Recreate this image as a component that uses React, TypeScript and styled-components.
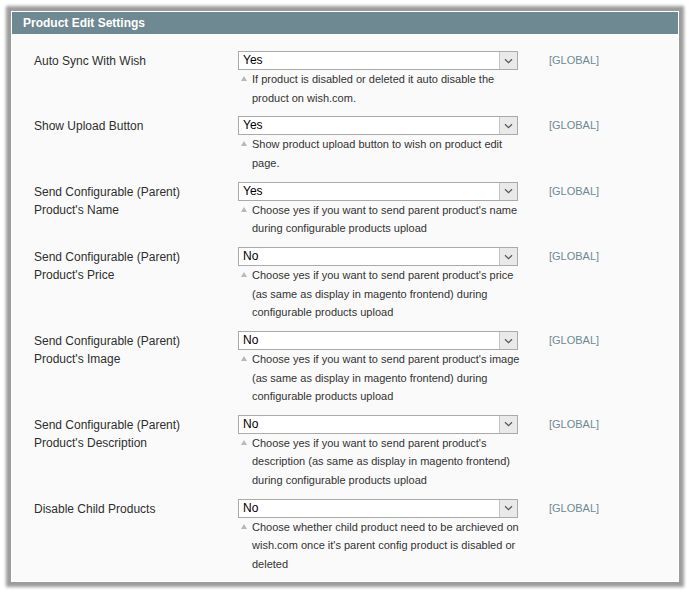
import React from 'react';
import styled, { createGlobalStyle } from 'styled-components';

const GlobalStyle = createGlobalStyle`
  html, body {
    margin: 0;
    padding: 0;
    background: #ffffff;
    font-family: "Liberation Sans", Arial, sans-serif;
  }
`;

const Page = styled.div`
  padding: 11px 10px 11px 11px;
`;

const Frame = styled.div`
  border: 1px solid #ffffff;
  box-shadow: 0 0 3px 5px #9c9c9c;
`;

const Head = styled.div`
  background: #6f8992;
  color: #ffffff;
  font-size: 12px;
  font-weight: bold;
  height: 22px;
  line-height: 23px;
  padding: 0 11px;
`;

const Body = styled.div`
  background: #fafafa;
  padding: 17px 0 8px 22px;
`;

const Row = styled.div`
  display: grid;
  grid-template-columns: 204px 280px 31px auto;
  padding-bottom: 9.4px;

  &:last-child {
    padding-bottom: 0;
  }
`;

const Label = styled.div`
  font-size: 12px;
  color: #2f2f2f;
  line-height: 18px;
  padding-top: 1px;
`;

const Field = styled.div`
  display: flex;
  flex-direction: column;
`;

const SelectBox = styled.div`
  display: flex;
  height: 19px;
  box-sizing: border-box;
  border: 1px solid #aaaaaa;
  background: #ffffff;
`;

const SelectValue = styled.div`
  flex: 1;
  font-size: 12px;
  line-height: 17px;
  color: #000000;
  padding-left: 4px;
`;

const ArrowButton = styled.div`
  width: 17px;
  background: #e9e9e9;
  border-left: 1px solid #c4c4c4;
  display: flex;
  align-items: center;
  justify-content: center;
`;

const Note = styled.div`
  position: relative;
  font-size: 11px;
  line-height: 18.5px;
  color: #333333;
  padding-left: 14px;
  white-space: nowrap;
`;

const NoteMark = styled.span`
  position: absolute;
  left: 3px;
  top: 6px;
  width: 0;
  height: 0;
  border-left: 3px solid transparent;
  border-right: 3px solid transparent;
  border-bottom: 5px solid #b8b8b8;
`;

const Scope = styled.div`
  grid-column: 4;
  font-size: 11px;
  color: #6f8992;
  line-height: 18px;
`;

interface Setting {
  label: string[];
  value: string;
  note: string[];
}

const settings: Setting[] = [
  {
    label: ['Auto Sync With Wish'],
    value: 'Yes',
    note: ['If product is disabled or deleted it auto disable the', 'product on wish.com.'],
  },
  {
    label: ['Show Upload Button'],
    value: 'Yes',
    note: ['Show product upload button to wish on product edit', 'page.'],
  },
  {
    label: ['Send Configurable (Parent)', "Product's Name"],
    value: 'Yes',
    note: ["Choose yes if you want to send parent product's name", 'during configurable products upload'],
  },
  {
    label: ['Send Configurable (Parent)', "Product's Price"],
    value: 'No',
    note: [
      "Choose yes if you want to send parent product's price",
      '(as same as display in magento frontend) during',
      'configurable products upload',
    ],
  },
  {
    label: ['Send Configurable (Parent)', "Product's Image"],
    value: 'No',
    note: [
      "Choose yes if you want to send parent product's image",
      '(as same as display in magento frontend) during',
      'configurable products upload',
    ],
  },
  {
    label: ['Send Configurable (Parent)', "Product's Description"],
    value: 'No',
    note: [
      "Choose yes if you want to send parent product's",
      'description (as same as display in magento frontend)',
      'during configurable products upload',
    ],
  },
  {
    label: ['Disable Child Products'],
    value: 'No',
    note: [
      'Choose whether child product need to be archieved on',
      "wish.com once it's parent config product is disabled or",
      'deleted',
    ],
  },
];

const Chevron = () => (
  <svg width="9" height="6" viewBox="0 0 9 6">
    <path d="M1 1.2 L4.5 4.6 L8 1.2" fill="none" stroke="#555" strokeWidth="1.2" />
  </svg>
);

const App: React.FC = () => {
  return (
    <Page>
      <GlobalStyle />
      <Frame>
        <Head>Product Edit Settings</Head>
        <Body>
          {settings.map((s, i) => (
            <Row key={i}>
              <Label>
                {s.label.map((l, j) => (
                  <div key={j}>{l}</div>
                ))}
              </Label>
              <Field>
                <SelectBox>
                  <SelectValue>{s.value}</SelectValue>
                  <ArrowButton>
                    <Chevron />
                  </ArrowButton>
                </SelectBox>
                <Note>
                  <NoteMark />
                  {s.note.map((n, j) => (
                    <div key={j}>{n}</div>
                  ))}
                </Note>
              </Field>
              <Scope>[GLOBAL]</Scope>
            </Row>
          ))}
        </Body>
      </Frame>
    </Page>
  );
};

export default App;
